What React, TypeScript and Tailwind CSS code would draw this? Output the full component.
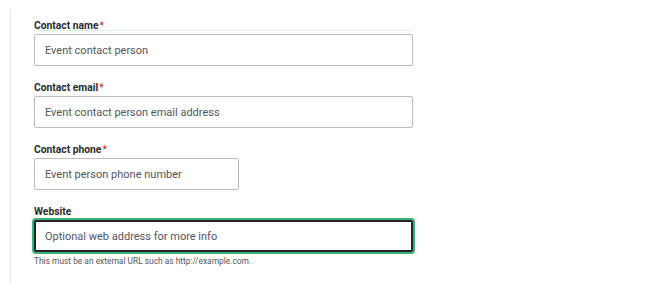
import React from 'react'

type FieldProps = {
  label: string
  placeholder: string
  required?: boolean
  width: string
  children?: React.ReactNode
}

function Field({label, placeholder, required, width, children}: FieldProps) {
  return (
    <div className="mb-[14px] flex flex-col">
      <div className="relative flex h-[16px] items-center text-[10.3px] font-bold leading-[16px] text-[#2b2c31]">
        {label}
        {required && <span className="ml-px font-normal text-[#d72222]">*</span>}
        {children}
      </div>
      <input
        type="text"
        placeholder={placeholder}
        className={`${width} h-[32px] rounded-[2px] border border-[#bcbcbc] bg-white px-[10px] text-[11px] text-[#232429] outline-none placeholder:text-[#545560]`}
      />
    </div>
  )
}

export default function App() {
  return (
    <div className="h-[283px] w-[666px] overflow-hidden bg-white pl-[10px] pt-[10px] font-['Roboto',sans-serif]">
      <div className="border-b-2 border-l border-[#e6e6e6] pb-[16px] pl-[23px] pt-[8px]">
        <Field label="Contact name" placeholder="Event contact person" required width="w-[379px]">
          <div className="absolute bottom-[3px] left-0 h-px w-[379px] bg-[#d5f2e3]" />
        </Field>
        <Field label="Contact email" placeholder="Event contact person email address" required width="w-[379px]" />
        <Field label="Contact phone" placeholder="Event person phone number" required width="w-[205px]" />
        <div className="flex flex-col">
          <div className="flex h-[16px] items-center text-[10.3px] font-bold leading-[16px] text-[#2b2c31]">Website</div>
          <input
            type="text"
            placeholder="Optional web address for more info"
            className="h-[32px] w-[379px] rounded-[2px] border-2 border-[#232429] bg-white px-[9px] text-[11px] text-[#232429] outline-none shadow-[0_0_0_2px_#3cb37a] placeholder:text-[#545560]"
          />
          <div className="mt-[3px] text-[8.4px] leading-[12px] text-[#55565b]">
            This must be an external URL such as http://example.com.
          </div>
        </div>
      </div>
    </div>
  )
}
